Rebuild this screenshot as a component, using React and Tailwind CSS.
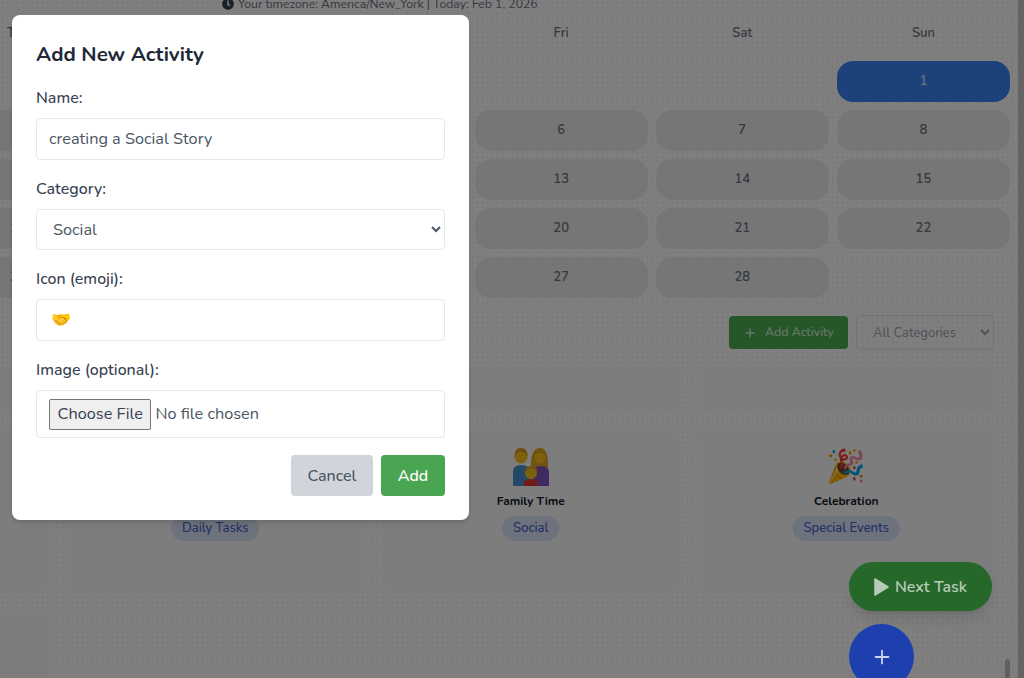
import { Plus } from "lucide-react";
import { FaClock } from "react-icons/fa";

const days = ["Mon", "Tue", "Wed", "Thu", "Fri", "Sat", "Sun"];

const dots =
  "bg-[radial-gradient(#0000000a_1.2px,transparent_1.4px)] bg-[size:5px_5px]";

// February 2026 starts on a Sunday, so six blanks come first
const cells = [...Array(6).fill(null), ...Array.from({ length: 28 }, (_, i) => i + 1)];

function FamilyEmoji() {
  return (
    <svg width="36" height="39" viewBox="0 0 36 39">
      {/* man */}
      <path d="M0 39V25Q0 18 8 18Q17 18 17 25V39Z" fill="#4a90d0" />
      <circle cx="8" cy="10" r="6.5" fill="#fcc21b" />
      <path d="M1.5 10Q1 1 8 1Q15 1 14.5 10Q13 5 8 5Q3 5 1.5 10Z" fill="#d99a1c" />
      {/* woman */}
      <path d="M18 22Q17 1 27 1Q36 1 35 22Q27 27 18 22Z" fill="#e0a526" />
      <path d="M20 39V25Q20 19 27 19Q36 19 36 25V39Z" fill="#7e57c2" />
      <circle cx="27" cy="11" r="5.5" fill="#fcc21b" />
      {/* child */}
      <path d="M11 39V36Q11 32 18 32Q25 32 25 36V39Z" fill="#e53935" />
      <circle cx="18" cy="26" r="6" fill="#fcc21b" />
      <path d="M12 26Q11 19 18 19Q25 19 24 26Q22 22 18 22Q14 22 12 26Z" fill="#e0a526" />
    </svg>
  );
}

function Calendar() {
  return (
    <div className="ml-[-250px] w-[1260px]">
      <div className="h-[60px] grid grid-cols-7 gap-2 pt-[24px]">
        {days.map((d) => (
          <div key={d} className="text-center text-[13px] leading-[16px] font-semibold text-[#6b7280]">
            {d}
          </div>
        ))}
      </div>
      <div className="grid grid-cols-7 gap-x-2 gap-y-2">
        {cells.map((c, i) =>
          c === null ? (
            <div key={i} className="h-[41px]" />
          ) : (
            <div
              key={i}
              className={
                c === 1
                  ? "h-[41px] pt-[1px] rounded-[16px] bg-[#3a82f6] text-[#dbe7fb] flex items-center justify-center text-[13px] font-semibold"
                  : "h-[41px] pt-[1px] rounded-[16px] bg-[#ececec] text-[#6b7280] flex items-center justify-center text-[13px] font-semibold"
              }
            >
              {c}
            </div>
          )
        )}
      </div>
    </div>
  );
}

function ActivityCard({ emoji, name, category }) {
  return (
    <div className="h-[164px] rounded-[10px] bg-[#fafafa] flex flex-col items-center">
      <div className="h-[52px] mt-[11px] flex items-center text-[32px] leading-[48px] font-['Noto_Color_Emoji',sans-serif]">{emoji}</div>
      <div className="h-[16px] mt-[1px] text-[12px] leading-[16px] font-bold text-[#111827]">{name}</div>
      <div className="mt-[7px] h-[25px] px-[11px] rounded-full bg-[#dbe4f8] text-[#4463c9] text-[13px] leading-[25px] font-medium">
        {category}
      </div>
    </div>
  );
}

function Field({ label, children }) {
  return (
    <div className="mb-[17px]">
      <label className="block h-[24px] mb-[8px] text-[16px] leading-[24px] font-medium text-[#374151]">{label}</label>
      {children}
    </div>
  );
}

export default function App() {
  return (
    <div className="relative h-[678px] overflow-hidden flex bg-white font-['Nunito','Lato','Liberation_Sans',sans-serif]">
      {/* page under the scrim */}
      <div className={`relative flex-1 min-w-0 overflow-hidden ${dots}`}>
        <div className="h-[4px]" />
        <div className="h-0 pl-[222px] flex items-center gap-[4px] text-[12.2px] text-[#6b7280] whitespace-nowrap">
          <FaClock size={12} className="text-[#374151]" />
          <span>Your timezone: America/New_York | Today: Feb 1, 2026</span>
        </div>
        <div className="mt-[-3px]">
          <Calendar />
        </div>

        <div className="h-[17px]" />
        <div className="flex justify-end gap-2 pr-[24px] h-[35px] items-center">
          <button className="h-[33px] w-[119px] rounded-[4px] bg-[#4caf50] text-[#d5ebd6] text-[12.3px] font-medium flex items-center justify-center gap-[8px]">
            <Plus size={14} strokeWidth={2.5} />
            Add Activity
          </button>
          <select className="h-[35px] w-[138px] rounded-[4px] border border-[#e5e7eb] pl-[12px] pr-[6px] text-[13px] text-[#9ca3af]">
            <option>All Categories</option>
          </select>
        </div>

        <div className="h-[17px]" />
        <div className="ml-[-250px] w-[1246px] grid grid-cols-4 gap-4">
          <div className="h-[46px] rounded-b-[10px] bg-[#fafafa]" />
          <div className="h-[46px] rounded-b-[10px] bg-[#fafafa]" />
          <div className="h-[46px] rounded-b-[10px] bg-[#fafafa]" />
          <div className="h-[46px] rounded-b-[10px] bg-[#fafafa]" />
          <div className="h-[164px] rounded-[10px] bg-[#fafafa]" />
          <ActivityCard emoji="" name="" category="Daily Tasks" />
          <ActivityCard emoji={<FamilyEmoji />} name="Family Time" category="Social" />
          <ActivityCard emoji="🎉" name="Celebration" category="Special Events" />
          <div className="h-[164px] rounded-[10px] bg-[#fafafa]" />
        </div>

        <div className="absolute right-[8px] top-[659px] w-[5px] h-[30px] rounded-full bg-[#c0c0c0]" />
      </div>
      <div className="w-[6px] bg-[#c8c8c8]" />

      {/* scrim */}
      <div className="absolute inset-0 bg-black/50" />

      {/* floating buttons */}
      <div className="absolute left-[849px] top-[562px] h-[49px] w-[143px] rounded-full bg-[#256829] text-[#b7cbb8] shadow-lg flex items-center justify-center gap-[6px] text-[16px] font-semibold">
        <svg width="15" height="18" viewBox="0 0 15 18" fill="currentColor" stroke="currentColor" strokeWidth="1.5" strokeLinejoin="round">
          <path d="M1 1 L14 9 L1 17 Z" />
        </svg>
        Next Task
      </div>
      <div className="absolute left-[849px] top-[624px] h-[65px] w-[65px] rounded-full bg-[#1e40af] text-[#c9d3ee] flex items-center justify-center">
        <Plus size={22} strokeWidth={2} />
      </div>

      {/* modal */}
      <div className="absolute left-[12px] top-[15px] w-[457px] h-[505px] rounded-[8px] bg-white p-[24px] shadow-md">
        <h2 className="h-[30px] mb-[17px] text-[20.5px] leading-[30px] font-bold text-[#1f2937]">Add New Activity</h2>
        <Field label="Name:">
          <input
            readOnly
            value="creating a Social Story"
            className="block w-full h-[42px] px-[12px] rounded-[4px] border border-[#e5e7eb] text-[16.3px] text-[#4b5563]"
          />
        </Field>
        <Field label="Category:">
          <select className="block w-full h-[41px] px-[12px] rounded-[4px] border border-[#e5e7eb] text-[16.3px] text-[#4b5563]">
            <option>Social</option>
          </select>
        </Field>
        <Field label="Icon (emoji):">
          <input
            readOnly
            value="🤝"
            className="block w-full h-[42px] px-[14px] rounded-[4px] border border-[#e5e7eb] text-[16px] text-[#4b5563]"
          />
        </Field>
        <Field label="Image (optional):">
          <input
            type="file"
            className="block w-full h-[48px] px-[12px] py-[8px] rounded-[4px] border border-[#e5e7eb] text-[16.3px] text-[#4b5563] file:h-[31px] file:px-[7.5px] file:mr-[4px] file:bg-[#efefef] file:border file:border-[#767676] file:rounded-[2px] file:text-[#374151]"
          />
        </Field>
        <div className="flex justify-end gap-2">
          <button className="h-[41px] w-[82px] rounded-[4px] bg-[#d1d5db] text-[#4b5563] text-[16px] font-medium">Cancel</button>
          <button className="h-[41px] w-[64px] rounded-[4px] bg-[#4aa553] text-white text-[16px] font-medium">Add</button>
        </div>
      </div>
    </div>
  );
}
